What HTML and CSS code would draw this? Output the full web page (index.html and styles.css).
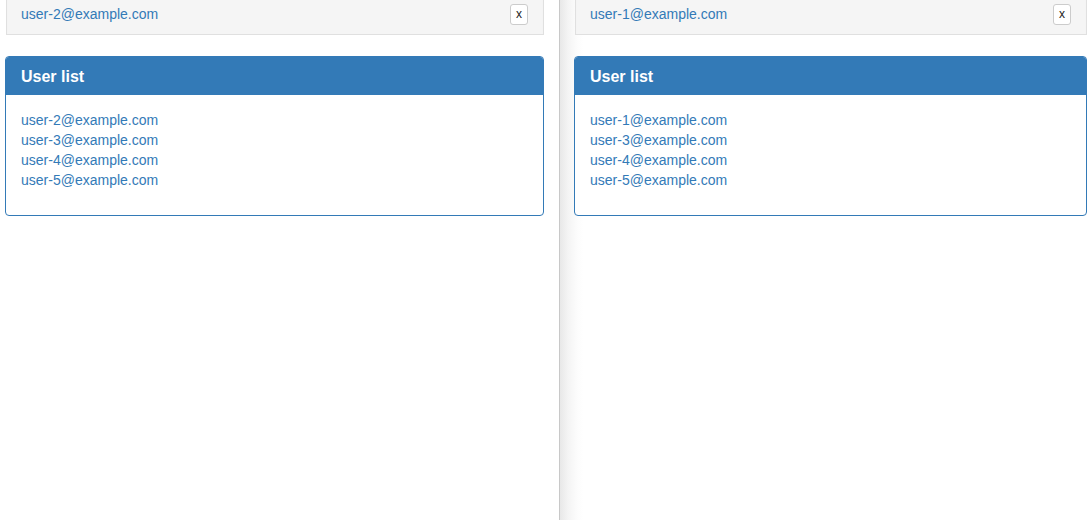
FILE: index.html
```html
<!DOCTYPE html>
<html>
<head>
<meta charset="utf-8">
<link rel="stylesheet" href="styles.css">
</head>
<body>
<div class="split">
  <div class="pane pane-left">
    <div class="well">
      <a class="me" href="#">user-2@example.com</a>
      <button class="close-btn">x</button>
    </div>
    <div class="panel">
      <div class="panel-heading">User list</div>
      <div class="panel-body">
        <ul class="users">
          <li><a href="#">user-2@example.com</a></li>
          <li><a href="#">user-3@example.com</a></li>
          <li><a href="#">user-4@example.com</a></li>
          <li><a href="#">user-5@example.com</a></li>
        </ul>
      </div>
    </div>
  </div>
  <div class="divider"></div>
  <div class="pane pane-right">
    <div class="well">
      <a class="me" href="#">user-1@example.com</a>
      <button class="close-btn">x</button>
    </div>
    <div class="panel">
      <div class="panel-heading">User list</div>
      <div class="panel-body">
        <ul class="users">
          <li><a href="#">user-1@example.com</a></li>
          <li><a href="#">user-3@example.com</a></li>
          <li><a href="#">user-4@example.com</a></li>
          <li><a href="#">user-5@example.com</a></li>
        </ul>
      </div>
    </div>
  </div>
</div>
</body>
</html>
```

FILE: styles.css
```css
* { box-sizing: border-box; }
html, body {
  margin: 0;
  padding: 0;
  background: #fff;
  font-family: "Liberation Sans", Arial, Helvetica, sans-serif;
  font-size: 14px;
  line-height: 20px;
  color: #333;
  overflow: hidden;
}
.split {
  display: grid;
  grid-template-columns: 559px 1px 532px;
  height: 520px;
}
.pane { overflow: hidden; }
.pane-left { padding: 0 15px 0 5px; }
.pane-right {
  padding: 0 5px 0 14px;
  background: linear-gradient(to right, #e8e8e8 0px, #f4f4f4 8px, #fdfdfd 18px, #fff 24px);
}
.divider { background: #c8c8c8; }
a { color: #337ab7; text-decoration: none; }

.well {
  margin-top: -12px;
  height: 47px;
  margin-left: 1px;
  background: #f5f5f5;
  border: 1px solid #e0e0e0;
  border-top: none;
  box-shadow: inset 0 1px 1px rgba(0,0,0,0.05);
  display: flex;
  align-items: center;
  justify-content: space-between;
  padding: 12px 15px 0 14px;
  margin-bottom: 21px;
}
.well .me { line-height: 20px; margin-top: -6px; }
.close-btn {
  margin-top: -6px;
  width: 18px;
  height: 21px;
  padding: 0;
  border: 1px solid #ccc;
  border-radius: 3px;
  background: #fff;
  font-family: "Liberation Sans", Arial, sans-serif;
  font-size: 12px;
  line-height: 18px;
  color: #222;
}
.panel {
  border: 1px solid #337ab7;
  border-radius: 4px;
  background: #fff;
  overflow: hidden;
}
.panel-heading {
  background: #337ab7;
  color: #fff;
  font-weight: bold;
  font-size: 16px;
  line-height: 18px;
  padding: 11px 15px 9px;
  height: 38px;
  border-bottom: 1px solid #337ab7;
}
.panel-body { padding: 15px; }
.users {
  list-style: none;
  margin: 0 0 10px;
  padding: 0;
}
.users li { line-height: 20px; }
```
